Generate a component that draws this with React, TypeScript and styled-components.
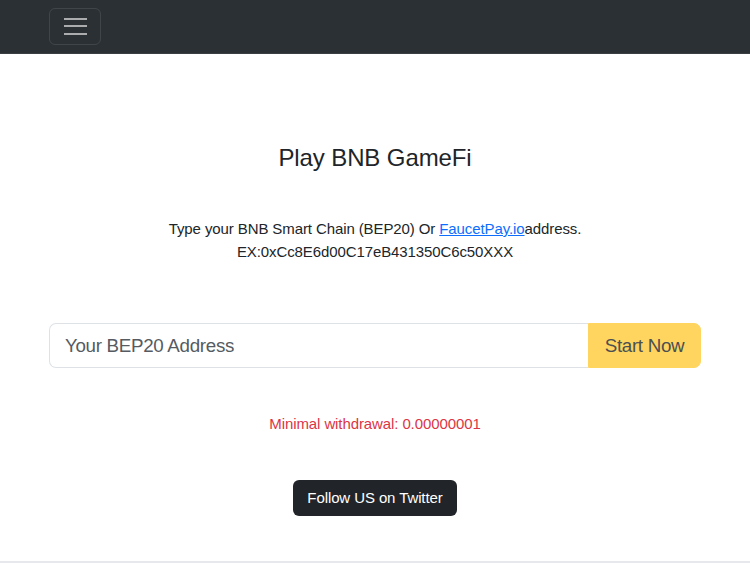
import React from "react";
import styled, { createGlobalStyle } from "styled-components";

const Global = createGlobalStyle`
  html { font-size: 15px; }
  body {
    margin: 0;
    background: #ffffff;
    color: #212529;
    font-family: "Liberation Sans", Arial, sans-serif;
    font-size: 15px;
    line-height: 1.5;
    letter-spacing: -0.1px;
  }
  * { box-sizing: border-box; }
`;

const Page = styled.div`
  min-height: 563px;
  display: flex;
  flex-direction: column;
`;

const Navbar = styled.nav`
  height: 54px;
  background: #2b3035;
  border-bottom: 1px solid #3a3f44;
  display: flex;
  align-items: center;
  padding: 0 49px;
`;

const Toggler = styled.button`
  width: 52px;
  height: 37px;
  margin-top: -1px;
  background: transparent;
  border: 1px solid rgba(255, 255, 255, 0.1);
  border-radius: 6px;
  display: flex;
  flex-direction: column;
  align-items: center;
  justify-content: center;
  gap: 5.5px;
  padding: 0;
  cursor: pointer;
`;

const Bar = styled.span`
  display: block;
  width: 23px;
  height: 2px;
  background: rgba(255, 255, 255, 0.6);
`;

const Main = styled.main`
  flex: 1;
  display: flex;
  flex-direction: column;
  align-items: center;
  padding: 87px 49px 0;
  border-bottom: 2px solid #e6e8eb;
`;

const Title = styled.h3`
  margin: 0;
  font-size: 24px;
  font-weight: 400;
  line-height: 34px;
`;

const Intro = styled.p`
  margin: 43px 0 0;
  text-align: center;
  line-height: 22.5px;
`;

const Link = styled.a`
  color: #0d6efd;
  text-decoration: underline;
`;

const InputGroup = styled.div`
  margin-top: 60px;
  width: 100%;
  display: flex;
  height: 45px;
`;

const Input = styled.input`
  flex: 1;
  min-width: 0;
  border: 1px solid #dee2e6;
  border-right: none;
  border-radius: 7px 0 0 7px;
  padding: 0 15px;
  font-family: inherit;
  font-size: 18.75px;
  letter-spacing: -0.3px;
  color: #212529;
  outline: none;
  &::placeholder {
    color: #555b61;
  }
`;

const StartButton = styled.button`
  width: 113px;
  border: 1px solid #ffd55f;
  background: #ffd55f;
  border-radius: 0 7px 7px 0;
  font-family: inherit;
  font-size: 18.75px;
  letter-spacing: -0.3px;
  color: #4c4f52;
  padding: 0;
  cursor: pointer;
`;

const Notice = styled.p`
  margin: 45px 0 0;
  color: #dc3545;
  line-height: 22px;
`;

const TwitterButton = styled.a`
  margin-top: 45px;
  display: inline-flex;
  align-items: center;
  justify-content: center;
  height: 36px;
  padding: 0 14px;
  background: #212529;
  color: #ffffff;
  border-radius: 6px;
  text-decoration: none;
  font-size: 15px;
`;

export default function App() {
  return (
    <>
      <Global />
      <Page>
        <Navbar>
          <Toggler aria-label="Toggle navigation">
            <Bar />
            <Bar />
            <Bar />
          </Toggler>
        </Navbar>
        <Main>
          <Title>Play BNB GameFi</Title>
          <Intro>
            Type your BNB Smart Chain (BEP20) Or <Link href="#">FaucetPay.io</Link>address.
            <br />
            EX:0xCc8E6d00C17eB431350C6c50XXX
          </Intro>
          <InputGroup>
            <Input placeholder="Your BEP20 Address" />
            <StartButton>Start Now</StartButton>
          </InputGroup>
          <Notice>Minimal withdrawal: 0.00000001</Notice>
          <TwitterButton href="#">Follow US on Twitter</TwitterButton>
        </Main>
      </Page>
    </>
  );
}
